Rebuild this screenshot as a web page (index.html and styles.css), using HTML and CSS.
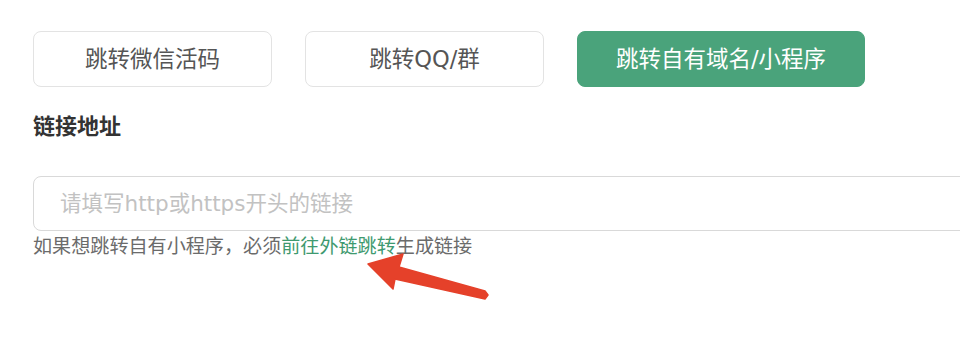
FILE: index.html
```html
<!DOCTYPE html>
<html lang="zh-CN">
<head>
<meta charset="utf-8">
<title>跳转设置</title>
<link rel="stylesheet" href="styles.css">
</head>
<body>
<main class="page">
  <div class="tabs">
    <button class="tab tab-sm">跳转微信活码</button>
    <button class="tab tab-sm">跳转QQ/群</button>
    <button class="tab tab-lg active">跳转自有域名/小程序</button>
  </div>
  <div class="label">链接地址</div>
  <input class="url-input" type="text" placeholder="请填写http或https开头的链接">
  <p class="hint">如果想跳转自有小程序，必须<a class="link" href="#">前往外链跳转</a>生成链接</p>
  <svg class="arrow" width="960" height="342" viewBox="0 0 960 342">
    <polygon points="368,264 403,254 399,267 485,291 488,295 485,299 395,279 393,289" fill="#e5412a" stroke="#e5412a" stroke-width="1.5" stroke-linejoin="round"/>
  </svg>
</main>
</body>
</html>
```
FILE: styles.css
```css
html, body {
  margin: 0;
  padding: 0;
  background: #ffffff;
  overflow: hidden;
}
body {
  width: 960px;
  height: 342px;
  font-family: "Noto Sans CJK SC", "Noto Sans", sans-serif;
}
.page {
  position: relative;
  padding: 31px 0 0 33px;
  height: 342px;
  box-sizing: border-box;
}
.tabs {
  display: flex;
  gap: 33px;
}
.tab {
  height: 56px;
  box-sizing: border-box;
  border: 1px solid #e3e3e3;
  border-radius: 8px;
  background: #ffffff;
  color: #555555;
  font-family: "DejaVu Sans", "Noto Sans CJK SC", sans-serif;
  font-size: 22.5px;
  padding: 0;
  margin: 0;
  line-height: 1;
}
.tab-sm { width: 239px; }
.tab-lg { width: 288px; }
.tab.active {
  background: #4aa37b;
  border-color: #4aa37b;
  color: #ffffff;
}
.label {
  margin-top: 22px;
  font-size: 22px;
  line-height: 30px;
  font-weight: 700;
  color: #333333;
}
.url-input {
  display: block;
  margin-top: 37px;
  width: 960px;
  height: 55px;
  box-sizing: border-box;
  border: 1px solid #d9d9d9;
  border-radius: 8px;
  padding: 0 0 0 26px;
  font-family: "DejaVu Sans", "Noto Sans CJK SC", sans-serif;
  font-size: 21.5px;
  color: #333333;
  outline: none;
}
.url-input::placeholder {
  color: #c2c2c2;
}
.hint {
  margin: 0;
  font-size: 19.1px;
  line-height: 28px;
  color: #6b6b6b;
}
.link {
  color: #3f9a70;
  text-decoration: none;
}
.arrow {
  position: absolute;
  left: 0;
  top: 0;
  pointer-events: none;
}
```
